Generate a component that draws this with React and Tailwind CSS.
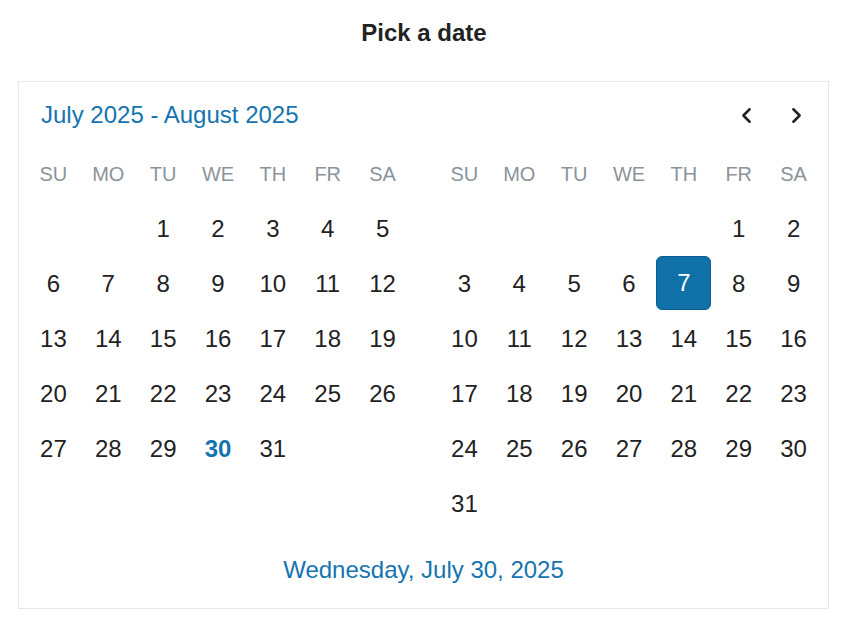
import { ChevronLeft, ChevronRight } from "lucide-react";

const WEEKDAYS = ["SU", "MO", "TU", "WE", "TH", "FR", "SA"];

function Month({ offset, days, today, selected }) {
  const cells = [];
  for (let i = 0; i < offset; i++) cells.push(null);
  for (let d = 1; d <= days; d++) cells.push(d);

  return (
    <div className="w-[385px]">
      <div className="grid grid-cols-7">
        {WEEKDAYS.map((w) => (
          <div key={w} className="h-[55px] flex items-center justify-center text-[20px] text-[#8b939b]">
            {w}
          </div>
        ))}
      </div>
      <div className="grid grid-cols-7">
        {cells.map((d, i) =>
          d === null ? (
            <div key={"e" + i} className="h-[55px]" />
          ) : d === selected ? (
            <div key={d} className="h-[55px] flex items-start justify-center">
              <div className="w-[55px] h-[54px] rounded-[6px] bg-[#1070a8] border border-[#0b5d8f] text-white flex items-center justify-center text-[24px]">
                {d}
              </div>
            </div>
          ) : (
            <div
              key={d}
              className={
                "h-[55px] flex items-center justify-center text-[24px] " +
                (d === today ? "font-bold text-[#1574b0]" : "text-[#222]")
              }
            >
              {d}
            </div>
          )
        )}
      </div>
    </div>
  );
}

export default function App() {
  return (
    <div className="min-h-screen bg-white pt-[18px] px-[18px] font-['Liberation_Sans',Arial,sans-serif]">
      <h1 className="h-[30px] leading-[30px] text-center text-[24px] font-bold text-[#222]">Pick a date</h1>

      <div className="mt-[33px] w-[811px] border border-[#e8e8e8]">
        <div className="h-[64px] flex items-center justify-between pt-[2px] pl-[22px] pr-[12px]">
          <span className="text-[24px] text-[#1574b0]">July 2025 - August 2025</span>
          <div className="flex gap-[10px]">
            <button className="w-[40px] h-[40px] flex items-center justify-center text-[#222]">
              <ChevronLeft size={25} strokeWidth={2.4} />
            </button>
            <button className="w-[40px] h-[40px] flex items-center justify-center text-[#222]">
              <ChevronRight size={25} strokeWidth={2.4} />
            </button>
          </div>
        </div>

        <div className="flex gap-[27px] px-[7px]">
          <Month offset={2} days={31} today={30} />
          <Month offset={5} days={31} selected={7} />
        </div>

        <div className="h-[77px] flex items-center justify-center text-[24px] text-[#1574b0]">
          Wednesday, July 30, 2025
        </div>
      </div>
    </div>
  );
}
